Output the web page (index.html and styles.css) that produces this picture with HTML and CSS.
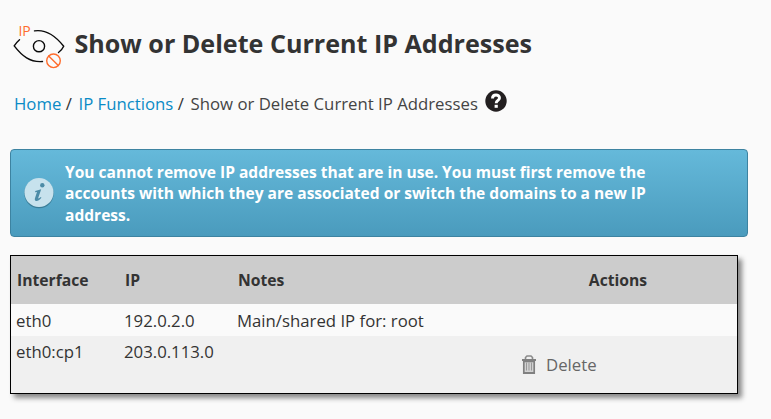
FILE: index.html
```html
<!DOCTYPE html>
<html lang="en">
<head>
<meta charset="utf-8">
<title>Show or Delete Current IP Addresses</title>
<link rel="stylesheet" href="styles.css">
</head>
<body>
<header class="page-header">
  <svg class="page-icon" viewBox="0 0 52 46" fill="none" stroke="#0a0a0a" stroke-width="1.4" stroke-linecap="round">
    <path d="M21.5 6.900C32 5.300 41 10 50.700 22.300Q49 26 45.500 28.500"/>
    <path d="M6.500 15.800Q3 19 1.200 21.900C9 32 17 38.500 29.500 37.500"/>
    <circle cx="26" cy="22.200" r="5.600"/>
    <g stroke="#ff6c2c"><circle cx="40.500" cy="36.800" r="6.800"/><path d="M35.700 32l9.600 9.600"/></g>
    <text class="page-icon-label" x="5.400" y="12">IP</text>
  </svg>
  <h1 class="page-title">Show or Delete Current IP Addresses</h1>
</header>
<nav class="breadcrumb">
  <a href="#">Home</a><span class="slash">/</span><a href="#">IP Functions</a><span class="slash">/</span><span class="current">Show or Delete Current IP Addresses</span>
  <svg class="help" viewBox="0 0 22 22"><circle cx="11" cy="11" r="10.700" fill="#231f20"/><path d="M7.500 8.500C7.500 3.700 14.500 4.100 14.500 8C14.500 10.500 11.200 10.400 11.200 13.200" fill="none" stroke="#fff" stroke-width="2.900"/><path d="M9.600 14.800h3.200v3H9.600z" fill="#fff"/></svg>
</nav>
<div class="alert">
  <svg class="info" viewBox="0 0 32 32"><circle cx="16" cy="16.500" r="14.700" fill="#397d98"/><circle cx="16" cy="15.500" r="14.500" fill="#c7e2ed"/><g fill="#4c8ba6"><circle cx="19.300" cy="8.300" r="2.200"/><path d="M12.200 14l6-1.700-2.900 8.500q-.4 1.600 2.600-.8l.5.800q-3.400 3.900-5.500 3.200-1.800-.7-.7-3.600l1.800-5.300-1.800.1z"/></g></svg>
  <p class="alert-text">You cannot remove IP addresses that are in use. You must first remove the accounts with which they are associated or switch the domains to a new IP address.</p>
</div>
<table class="ip-table">
  <colgroup><col class="c-if"><col class="c-ip"><col class="c-notes"><col></colgroup>
  <thead><tr><th>Interface</th><th>IP</th><th>Notes</th><th class="actions-head">Actions</th></tr></thead>
  <tbody>
    <tr class="row-main"><td>eth0</td><td>192.0.2.0</td><td>Main/shared IP for: root</td><td></td></tr>
    <tr class="row-alt"><td>eth0:cp1</td><td>203.0.113.0</td><td></td><td class="actions"><a class="delete" href="#"><svg class="trash" viewBox="0 0 14 20"><path d="M3.500 4V2.500L5 1h4l1.500 1.500V4" fill="none" stroke="#8a8a8a" stroke-width="1.600"/><path d="M0 4h14v2H0z" fill="#808080"/><path d="M1.800 6.500h10.400v11.700H1.800z" fill="#d2d2d2" stroke="#808080" stroke-width="1.700"/><path d="M4.500 7.500v8M7 7.500v8M9.500 7.500v8" stroke="#999"/><path d="M1 17h12v2H1z" fill="#808080"/></svg>Delete</a></td></tr>
  </tbody>
</table>
</body>
</html>
```
FILE: styles.css
```css
body {
  box-sizing: border-box;
  min-height: 419px;
  margin: 0;
  padding: 24px 0 0 10px;
  background: #fafafa;
  color: #333;
  font: 16.75px/22px "Open Sans", sans-serif;
}
a { color: #0a8bc6; text-decoration: none; }
.page-header { display: flex; height: 46px; padding-left: 3px; }
.page-icon { width: 52px; height: 46px; overflow: visible; }
.page-icon-label { font: 14px "Open Sans", sans-serif; fill: #ff6c2c; stroke: none; }
.page-title { margin: 2px 0 0 9.500px; font-size: 25.1px; line-height: 34px; white-space: nowrap; }
.breadcrumb { display: flex; height: 22px; margin-top: 23px; padding-left: 4px; font-size: 16.75px; white-space: nowrap; }
.slash { margin: 0 6.500px 0 4.500px; }
.current { color: #444; }
.help { width: 22px; height: 22px; margin: -3px 0 0 7px; }
.alert {
  box-sizing: border-box;
  display: flex;
  align-items: center;
  width: 738px;
  height: 88px;
  margin-top: 34px;
  padding-left: 12px;
  border: 1px solid #3d83a1;
  border-radius: 4px;
  background: linear-gradient(#65b9da, #4a9bbd);
}
.info { width: 32px; height: 32px; flex: none; }
.alert-text { width: 600px; margin: 2px 0 0 10px; color: #fff; font-size: 15.55px; font-weight: 700; line-height: 21.5px; }
.ip-table {
  width: 728px;
  margin-top: 18px;
  table-layout: fixed;
  border: 1px solid #000;
  border-spacing: 0;
  box-shadow: 4px 4px 5px #888;
}
.c-if { width: 108px; }
.c-ip { width: 113px; }
.c-notes { width: 265px; }
.ip-table th { height: 48px; padding: 0 6px; background: #ccc; font-size: 15.7px; text-align: left; }
.ip-table .actions-head { padding-left: 8px; text-align: center; }
.ip-table td { padding: 5px 5px 0; vertical-align: top; }
.ip-table .row-main td { height: 26px; padding-top: 6px; background: #fafafa; }
.row-alt td { height: 52px; background: #f0f0f0; }
.ip-table .actions { padding: 18px 0 0 25px; height: 39px; }
.delete { display: flex; align-items: center; color: #666; }
.trash { width: 14px; height: 20px; margin-right: 10px; }
```
